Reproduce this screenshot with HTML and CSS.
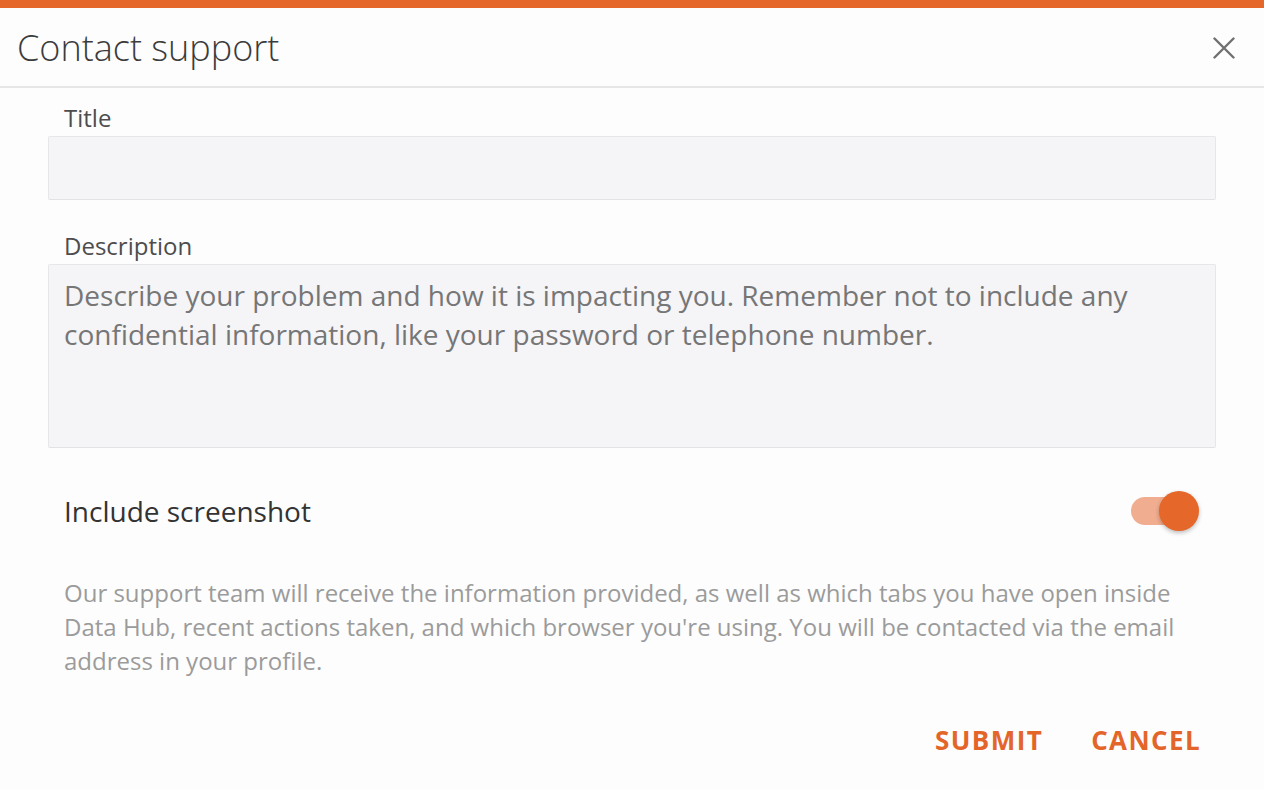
FILE: index.html
```html
<!DOCTYPE html>
<html>
<head>
<meta charset="utf-8">
<link rel="stylesheet" href="styles.css">
</head>
<body>
<div class="dialog">
  <div class="topbar"></div>
  <header class="header">
    <h1 class="title">Contact support</h1>
    <button class="close" aria-label="Close">
      <svg width="22" height="22" viewBox="0 0 22 22"><path d="M1.5 1.5 L20.5 20.5 M20.5 1.5 L1.5 20.5" stroke="#707070" stroke-width="2.4" stroke-linecap="round"/></svg>
    </button>
  </header>
  <main class="content">
    <label class="label first">Title</label>
    <div class="input"></div>
    <label class="label">Description</label>
    <div class="textarea"><span class="placeholder">Describe your problem and how it is impacting you. Remember not to include any confidential information, like your password or telephone number.</span></div>
    <div class="toggle-row">
      <span class="toggle-label">Include screenshot</span>
      <span class="switch"><span class="track"></span><span class="thumb"></span></span>
    </div>
    <p class="help">Our support team will receive the information provided, as well as which tabs you have open inside Data Hub, recent actions taken, and which browser you're using. You will be contacted via the email address in your profile.</p>
    <div class="actions">
      <button class="btn">SUBMIT</button>
      <button class="btn">CANCEL</button>
    </div>
  </main>
</div>
</body>
</html>
```
FILE: styles.css
```css
html, body {
  margin: 0;
  padding: 0;
  background: #fdfdfd;
}
body {
  font-family: "Open Sans", "Liberation Sans", sans-serif;
  color: #3a3a3a;
}
.dialog {
  width: 1264px;
  height: 790px;
  overflow: hidden;
}
.topbar {
  height: 8px;
  background: #e5672a;
}
.header {
  height: 78px;
  display: flex;
  align-items: center;
  justify-content: space-between;
  padding: 0 29px 0 17px;
  border-bottom: 2px solid #e6e6e6;
}
.title {
  margin: 0;
  font-size: 36px;
  font-weight: 300;
  color: #3b3b3b;
}
.close {
  border: none;
  background: none;
  padding: 0;
  width: 22px;
  height: 22px;
  display: flex;
  align-items: center;
  justify-content: center;
  margin-top: 1px;
}
.content {
  padding: 0 48px;
}
.label {
  display: block;
  font-size: 24px;
  line-height: 32px;
  color: #4d4d4d;
  padding-left: 16px;
  margin: 30px 0 2px 0;
}
.label.first {
  margin-top: 14px;
}
.input {
  height: 62px;
  background: #f5f4f6;
  border: 1px solid #e7e6e8;
  border-bottom-color: #e2e1e3;
  border-radius: 2px;
}
.textarea {
  height: 184px;
  box-sizing: border-box;
  background: #f5f4f6;
  border: 1px solid #e7e6e8;
  border-bottom-color: #e2e1e3;
  border-radius: 2px;
  padding: 11px 15px 0 15px;
}
.placeholder {
  display: block;
  font-size: 28px;
  line-height: 39px;
  color: #767676;
}
.toggle-row {
  display: flex;
  align-items: center;
  justify-content: space-between;
  height: 40px;
  margin-top: 43px;
  padding: 0 15px 0 16px;
}
.toggle-label {
  font-size: 28px;
  line-height: 40px;
  color: #333;
}
.switch {
  position: relative;
  width: 72px;
  height: 40px;
  display: block;
}
.track {
  position: absolute;
  left: 2px;
  top: 6px;
  width: 60px;
  height: 28px;
  border-radius: 14px;
  background: #f1ad8f;
}
.thumb {
  position: absolute;
  left: 30px;
  top: 0;
  width: 40px;
  height: 40px;
  border-radius: 50%;
  background: #e5672a;
  box-shadow: 0 2px 4px rgba(0,0,0,0.25);
}
.help {
  margin: 45px 0 0 0;
  padding: 0 16px;
  font-size: 24px;
  line-height: 34px;
  color: #9b9b9b;
}
.actions {
  display: flex;
  justify-content: flex-end;
  gap: 48px;
  margin-top: 44px;
  padding-right: 15px;
}
.btn {
  border: none;
  background: none;
  padding: 0;
  font-family: "Open Sans", "Liberation Sans", sans-serif;
  font-weight: 700;
  font-size: 26px;
  line-height: 36px;
  color: #e3652a;
  letter-spacing: 1.4px;
}
```
